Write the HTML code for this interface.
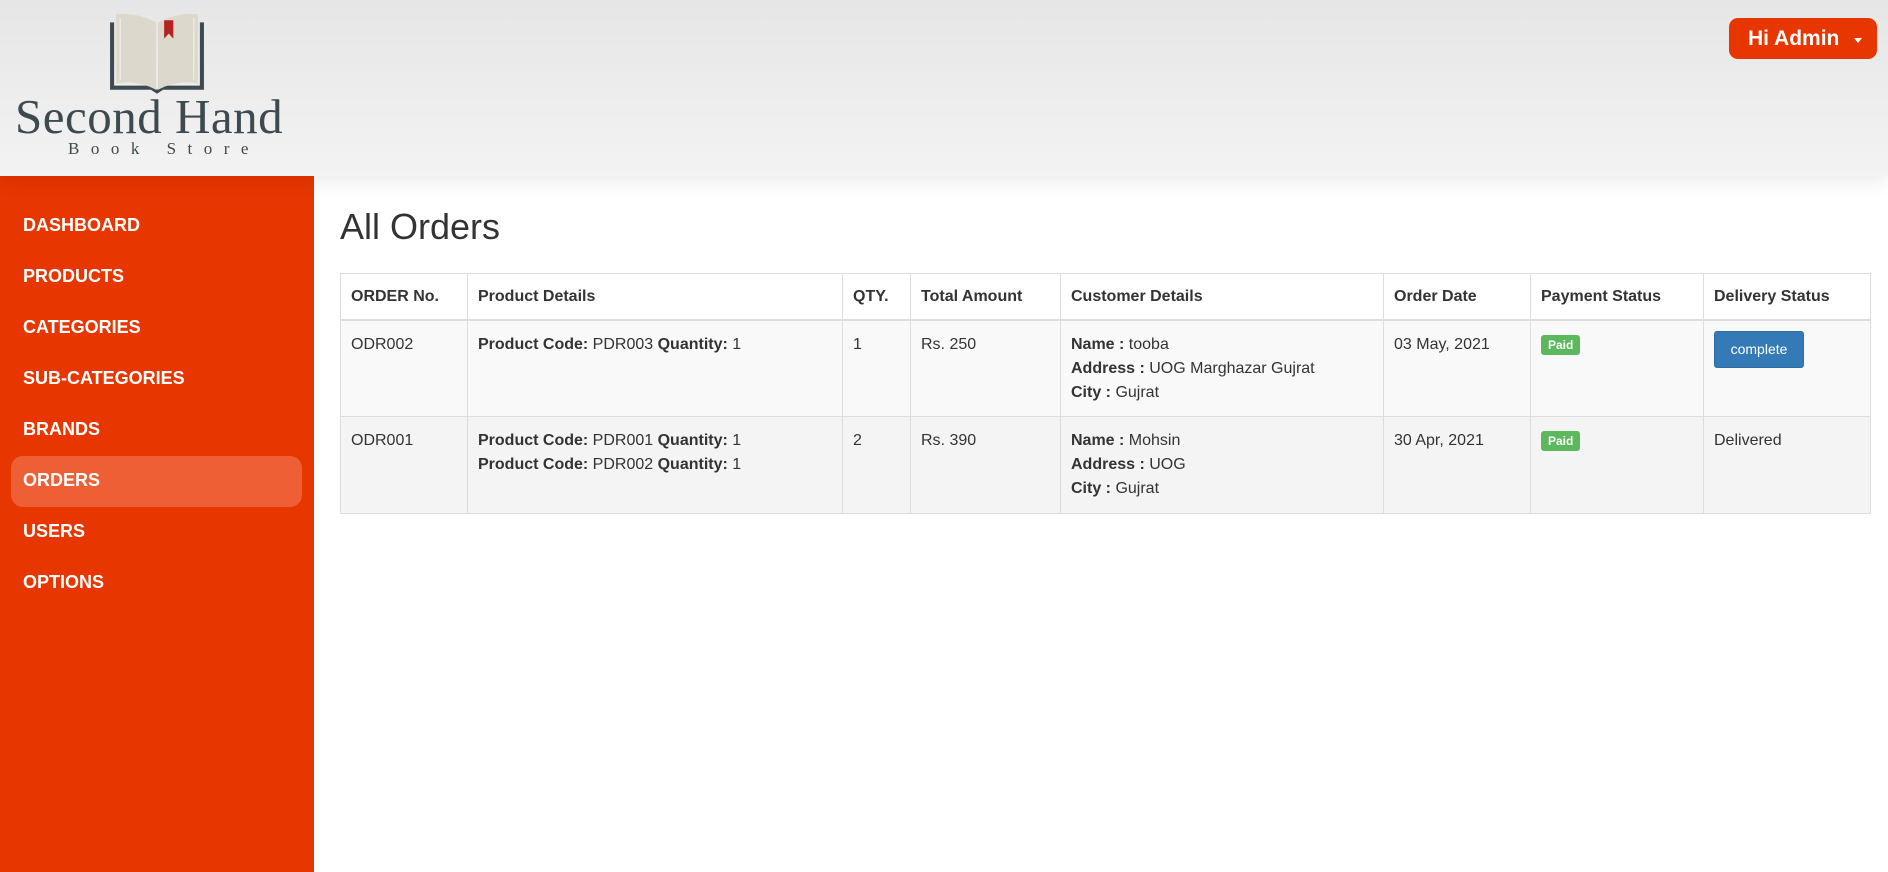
<!DOCTYPE html>
<html><head><meta charset="utf-8"><style>
*{margin:0;padding:0;box-sizing:border-box}
body{width:1888px;height:872px;overflow:hidden;background:#fff;font-family:"Liberation Sans",sans-serif;color:#333;position:relative}
.header{position:absolute;left:0;top:0;width:1888px;height:176px;background:linear-gradient(#e6e6e6,#f3f3f3);box-shadow:0 6px 18px rgba(0,0,0,0.08);z-index:2}
.logo1{position:absolute;left:15px;top:88px;font-family:"Liberation Serif",serif;font-size:49px;color:#3d4a50;letter-spacing:0.5px}
.logo2{position:absolute;left:68px;top:139px;font-family:"Liberation Serif",serif;font-size:17px;color:#3d4a50;letter-spacing:11.5px}
.btn{position:absolute;left:1729px;top:18px;width:148px;height:41px;background:#e83600;border-radius:9px;color:#fff;font-weight:bold;font-size:21px;line-height:41px;padding-left:19px}
.btn:after{content:"";position:absolute;left:125px;top:20px;border-left:4px solid transparent;border-right:4px solid transparent;border-top:5px solid #fff}
.side{position:absolute;left:0;top:176px;width:314px;height:696px;background:#e83600}
.nav{position:absolute;left:23px;color:#fff;font-weight:bold;font-size:18px}
.pill{position:absolute;left:11px;top:280px;width:291px;height:51px;background:#ee5f36;border-radius:12px}
h1{position:absolute;left:340px;top:206px;font-size:36px;font-weight:normal;color:#333}
table{position:absolute;left:340px;top:273px;width:1531px;border-collapse:collapse;font-size:16px}
td,th{border:1px solid #ddd;text-align:left;vertical-align:top;padding:12px 10px 0 10px;line-height:24px}
th{height:46px;border-bottom:2px solid #ddd;padding-top:11px}
tr.r1 td{background:#f9f9f9;height:97px}
tr.r2 td{background:#f4f4f4;height:97px}
.paid{display:inline-block;background:#5cb85c;color:#fff;font-weight:bold;font-size:12px;line-height:20px;padding:0 7px;border-radius:3px;margin-top:2px}
.cmp{display:inline-block;background:#337ab7;border:1px solid #2e6da4;color:#fff;font-size:14px;line-height:35px;width:90px;text-align:center;border-radius:3px;margin-top:-2px}
</style></head><body>
<div class="header">
<svg style="position:absolute;left:108px;top:12px" width="98" height="86" viewBox="0 0 96 84">
<path d="M2 10 V76 H42 L48 80 L54 76 H94 V10 H90 V72 H56 L48 76 L40 72 H6 V10 Z" fill="#3d4a50"/>
<path d="M8 2 Q28 0 47 10 V76 Q28 66 8 70 Z" fill="#dcd8cc"/>
<path d="M49 10 Q68 0 88 2 V70 Q68 66 49 76 Z" fill="#dcd8cc"/>
<path d="M12 6 V66 M84 6 V66" stroke="#eceae2" stroke-width="1.5"/>
<path d="M55 8 H64 V26 L59.5 21 L55 26 Z" fill="#b5221f"/>
</svg>
<div class="logo1">Second Hand</div>
<div class="logo2">Book Store</div>
<div class="btn">Hi Admin</div>
</div>
<div class="side">
<div class="pill"></div>
</div>
<div class="nav" style="top:215px">DASHBOARD</div>
<div class="nav" style="top:266px">PRODUCTS</div>
<div class="nav" style="top:317px">CATEGORIES</div>
<div class="nav" style="top:368px">SUB-CATEGORIES</div>
<div class="nav" style="top:419px">BRANDS</div>
<div class="nav" style="top:470px">ORDERS</div>
<div class="nav" style="top:521px">USERS</div>
<div class="nav" style="top:572px">OPTIONS</div>
<h1>All Orders</h1>
<table>
<tr><th style="width:127px">ORDER No.</th><th style="width:375px">Product Details</th><th style="width:68px">QTY.</th><th style="width:150px">Total Amount</th><th style="width:323px">Customer Details</th><th style="width:147px">Order Date</th><th style="width:173px">Payment Status</th><th>Delivery Status</th></tr>
<tr class="r1"><td>ODR002</td><td><b>Product Code:</b> PDR003 <b>Quantity:</b> 1</td><td>1</td><td>Rs. 250</td><td><b>Name :</b> tooba<br><b>Address :</b> UOG Marghazar Gujrat<br><b>City :</b> Gujrat</td><td>03 May, 2021</td><td><span class="paid">Paid</span></td><td><span class="cmp">complete</span></td></tr>
<tr class="r2"><td>ODR001</td><td><b>Product Code:</b> PDR001 <b>Quantity:</b> 1<br><b>Product Code:</b> PDR002 <b>Quantity:</b> 1</td><td>2</td><td>Rs. 390</td><td><b>Name :</b> Mohsin<br><b>Address :</b> UOG<br><b>City :</b> Gujrat</td><td>30 Apr, 2021</td><td><span class="paid">Paid</span></td><td>Delivered</td></tr>
</table>
</body></html>
